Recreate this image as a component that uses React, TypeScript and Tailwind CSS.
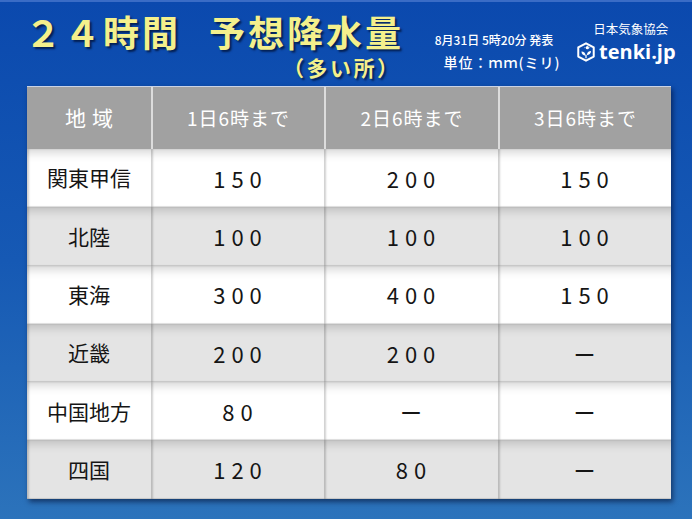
import React from "react";

const rows = [
  { area: "関東甲信", v: ["150", "200", "150"] },
  { area: "北陸", v: ["100", "100", "100"] },
  { area: "東海", v: ["300", "400", "150"] },
  { area: "近畿", v: ["200", "200", "ー"] },
  { area: "中国地方", v: ["80", "ー", "ー"] },
  { area: "四国", v: ["120", "80", "ー"] },
];

const cellShade =
  "shadow-[inset_2px_0_2px_rgba(0,0,0,0.18),inset_0_12px_10px_-8px_rgba(0,0,0,0.16),inset_0_-1px_0_rgba(0,0,0,0.08)]";

const Logo = () => (
  <svg viewBox="0 0 22 22" className="w-[20px] h-[20px]">
    <path
      d="M11 1.5 L19.5 6 L19.5 16 L11 20.5 L2.5 16 L2.5 6 Z"
      fill="none"
      stroke="white"
      strokeWidth="2.2"
      strokeLinejoin="round"
    />
    <circle cx="12.5" cy="6.2" r="1.8" fill="white" />
    <path d="M12.5 2.8v0.8M15.6 6.2h-0.8M9.4 6.2h0.8" stroke="white" strokeWidth="1" />
    <path d="M6 10.5c2.5 0 4.5 1.5 4.5 4.5c-2.5 0-4.5-1.5-4.5-4.5Z" fill="white" />
    <path d="M16.5 10c-2.5 0-4.5 1.5-4.5 4.5c2.5 0 4.5-1.5 4.5-4.5Z" fill="white" />
    <path d="M11 14v4" stroke="white" strokeWidth="1.4" />
  </svg>
);

export default function App() {
  return (
    <div
      className="w-[692px] h-[519px] flex flex-col bg-gradient-to-b from-[#0b49ae] via-[#1659b4] to-[#2c73bb] border-t-2 border-[#3a6cc6]"
      style={{ fontFamily: '"Noto Sans CJK JP", "Noto Sans", sans-serif' }}
    >
      {/* header */}
      <div className="h-[84px] flex">
        <div className="w-[412px] pl-[25px] pt-[10px] text-[#f4f08c] [text-shadow:2px_2px_2px_rgba(0,20,60,0.8)]">
          <div className="flex text-[36px] leading-[38px] font-bold tracking-[3px]">
            <span>２４時間</span>
            <span className="ml-[28px]">予想降水量</span>
          </div>
          <div className="pl-[258px] mt-[4px] text-[21px] leading-[26px] font-bold tracking-[2.5px]">
            （多い所）
          </div>
        </div>
        <div className="w-[164px] pt-[29px] flex flex-col items-center text-white font-medium">
          <div className="text-[12px] leading-[18px]">8月31日 5時20分 発表</div>
          <div className="text-[14px] leading-[22px] mt-[2px] pl-[16px] tracking-[1px]">単位：ｍｍ(ミリ)</div>
        </div>
        <div className="pt-[19px] flex flex-col items-center text-white">
          <div className="text-[12.5px] leading-[16px] pl-[10px]">日本気象協会</div>
          <div className="flex items-center gap-[3px] mt-[4px]">
            <Logo />
            <span
              className="text-[20px] leading-[22px] font-bold"
              style={{ fontFamily: '"Open Sans", "Noto Sans", sans-serif' }}
            >
              tenki.jp
            </span>
          </div>
        </div>
      </div>

      {/* table */}
      <div className="mx-[27px] w-[644px] flex flex-col border-t border-[#c9d3e6] shadow-[2px_3px_5px_rgba(0,10,40,0.55)]">
        <div className="h-[62px] grid grid-cols-[124px_173px_174px_173px] bg-[#a1a1a1] text-white">
          <div className="flex items-center justify-center text-[21px] tracking-[6px] pl-[6px]">地域</div>
          <div className="flex items-center justify-center text-[19px] tracking-[1px] border-l-2 border-[#dcdcdc]">1日6時まで</div>
          <div className="flex items-center justify-center text-[19px] tracking-[1px] border-l-2 border-[#dcdcdc]">2日6時まで</div>
          <div className="flex items-center justify-center text-[19px] tracking-[1px] border-l-2 border-[#dcdcdc]">3日6時まで</div>
        </div>
        {rows.map((r, i) => (
          <div
            key={r.area}
            className={
              "h-[58.3px] grid grid-cols-[124px_173px_174px_173px] text-[#151515] " +
              (i % 2 === 0 ? "bg-white" : "bg-[#e4e4e4]")
            }
          >
            <div className={"flex items-center justify-center text-[21px] " + cellShade}>{r.area}</div>
            {r.v.map((v, j) => (
              <div
                key={j}
                className={"flex items-center justify-center text-[22px] tracking-[6px] pl-[6px] " + cellShade}
              >
                {v}
              </div>
            ))}
          </div>
        ))}
      </div>
    </div>
  );
}
